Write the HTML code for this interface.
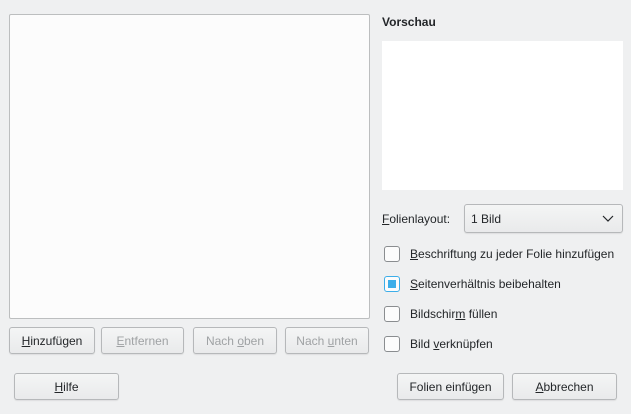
<html><head><style>
body{margin:0;width:631px;height:414px;background:#eff0f1;font-family:"Liberation Sans",sans-serif;font-size:12px;color:#232629;position:relative;overflow:hidden}
.a{position:absolute}
.box{background:#fcfcfc;border:1px solid #bcbebf;border-radius:2px;box-sizing:border-box}
.btn{position:absolute;box-sizing:border-box;border:1px solid #b6b8ba;border-radius:3px;background:linear-gradient(#f4f5f5,#e9eaeb);text-align:center;line-height:27px;height:27px;box-shadow:0 1px 1px rgba(0,0,0,.08)}
.dis{color:#9fa2a4}
.cb{position:absolute;left:384px;width:16px;height:16px;box-sizing:border-box;border:1px solid #8a8d90;border-radius:3px;background:#fcfcfc}
.lbl{position:absolute;left:410px}
u{text-decoration:underline}
</style></head><body>
<div class="a box" style="left:9px;top:14px;width:361px;height:305px"></div>
<div class="btn" style="left:9px;top:327px;width:86px"><u>H</u>inzufügen</div>
<div class="btn dis" style="left:101px;top:327px;width:83px"><u>E</u>ntfernen</div>
<div class="btn dis" style="left:193px;top:327px;width:84px">Nach <u>o</u>ben</div>
<div class="btn dis" style="left:285px;top:327px;width:84px">Nach <u>u</u>nten</div>
<div class="btn" style="left:14px;top:373px;width:105px"><u>H</u>ilfe</div>
<div class="btn" style="left:397px;top:373px;width:107px">Folien einfügen</div>
<div class="btn" style="left:512px;top:373px;width:105px"><u>A</u>bbrechen</div>
<div class="a" style="left:382px;top:15px;font-weight:bold">Vorschau</div>
<div class="a" style="left:382px;top:41px;width:241px;height:149px;background:#fff"></div>
<div class="a" style="left:382px;top:212px"><u>F</u>olienlayout:</div>
<div class="btn" style="left:464px;top:204px;width:159px;height:29px;text-align:left;padding-left:6px;line-height:28px">1 Bild
<svg class="a" style="right:8px;top:10px" width="12" height="8"><path d="M1 1L6 6L11 1" stroke="#232629" fill="none" stroke-width="1.2"/></svg></div>
<div class="cb" style="top:246px"></div><div class="lbl" style="top:247px"><u>B</u>eschriftung zu jeder Folie hinzufügen</div>
<div class="cb" style="top:276px;border-color:#3daee9"><div class="a" style="left:3px;top:3px;width:8px;height:8px;background:#3daee9"></div></div><div class="lbl" style="top:277px"><u>S</u>eitenverhältnis beibehalten</div>
<div class="cb" style="top:306px"></div><div class="lbl" style="top:307px">Bildschir<u>m</u> füllen</div>
<div class="cb" style="top:336px"></div><div class="lbl" style="top:337px">Bild <u>v</u>erknüpfen</div>
</body></html>
